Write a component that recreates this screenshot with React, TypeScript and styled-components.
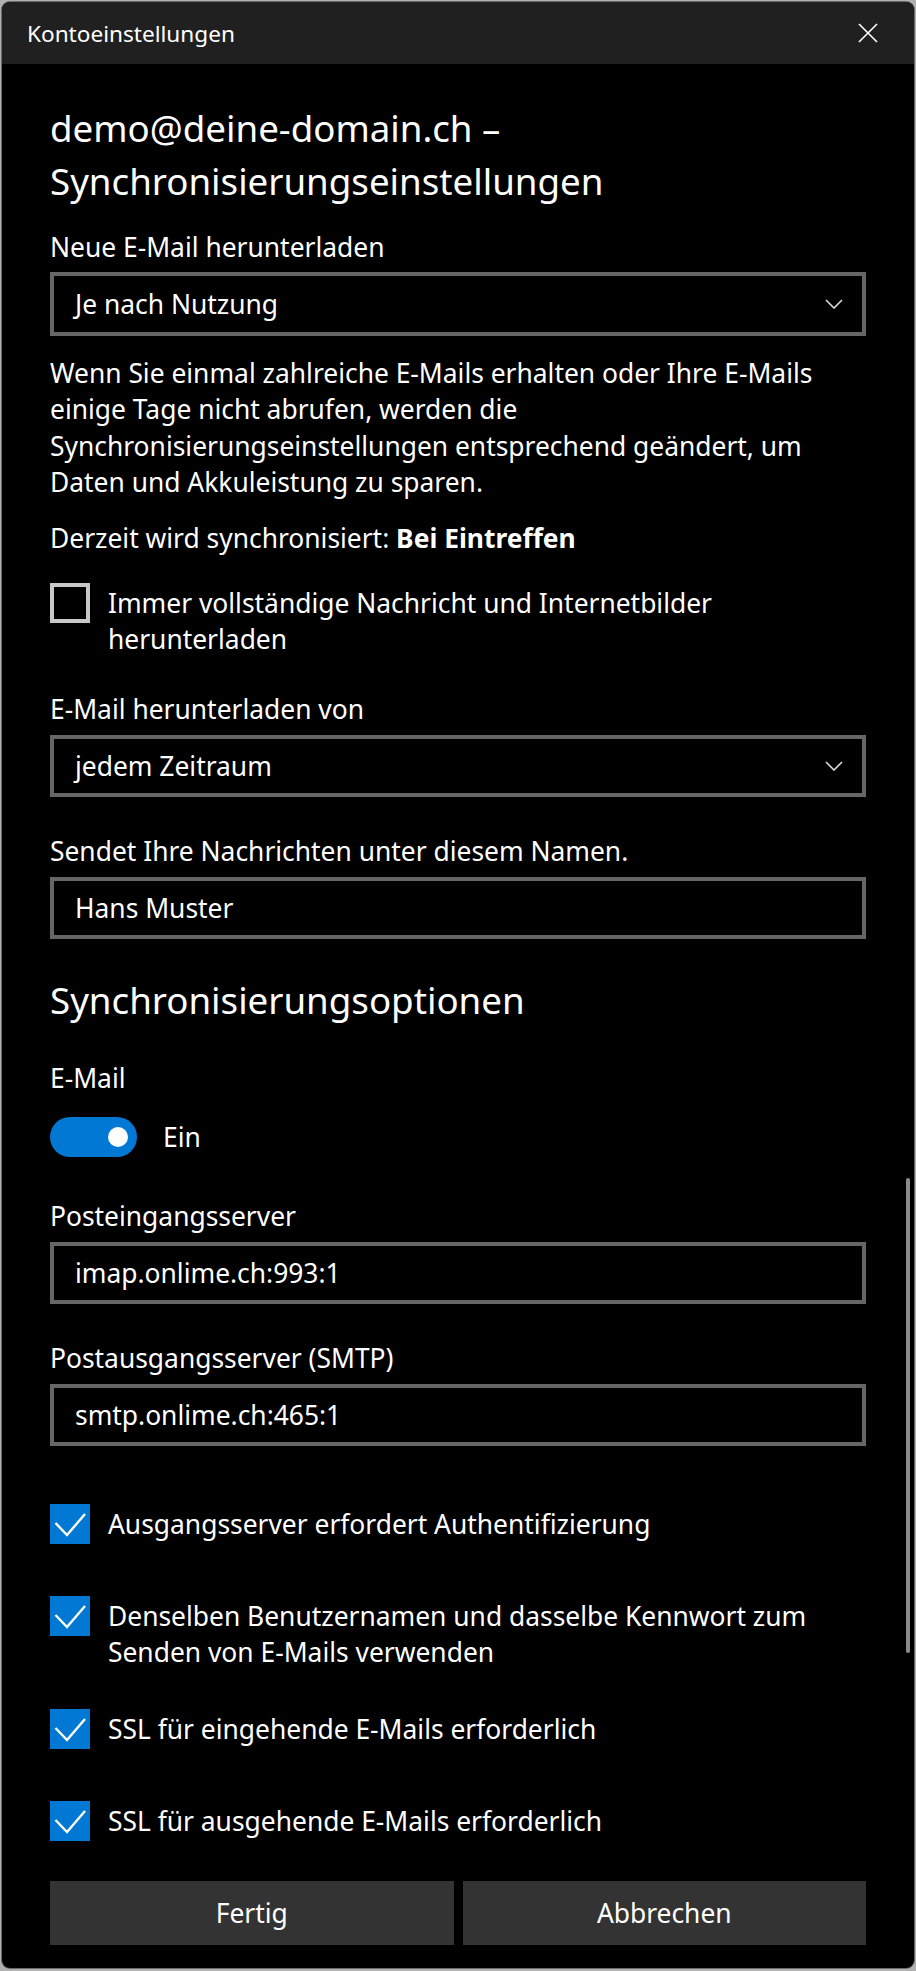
import React from "react";
import styled, { createGlobalStyle } from "styled-components";

const GlobalStyle = createGlobalStyle`
  html, body {
    margin: 0;
    background: #b0b0b0;
  }
  body {
    font-family: "Noto Sans", "Open Sans", sans-serif;
    -webkit-font-smoothing: antialiased;
  }
`;

// Dialog frame
const Window = styled.div`
  position: relative;
  box-sizing: border-box;
  width: 912px;
  height: 1966px;
  margin: 2px;
  background: #000;
  color: #fff;
  border-radius: 8px;
  overflow: hidden;
  box-shadow: 0 0 0 1px #6a6a6a;
`;

const TitleBar = styled.header`
  display: flex;
  align-items: center;
  justify-content: space-between;
  height: 62px;
  padding: 0 36px 0 25px;
  background: #202020;
`;

const Title = styled.span`
  font-size: 22.6px;
  color: #fff;
`;

const CloseButton = styled.button`
  display: flex;
  padding: 0;
  border: 0;
  background: none;
  cursor: pointer;
`;

const Body = styled.main`
  display: flex;
  flex-direction: column;
  padding: 0 48px 23px;
`;

const Heading = styled.h2<{ $mt: number }>`
  margin: ${(p) => p.$mt}px 0 0;
  font-size: 36.7px;
  font-weight: 400;
  line-height: 53px;
`;

const Label = styled.div<{ $mt: number }>`
  margin-top: ${(p) => p.$mt}px;
  font-size: 26.4px;
  line-height: 36px;
`;

const Paragraph = styled.p<{ $mt: number }>`
  margin: ${(p) => p.$mt}px 0 0;
  font-size: 26.4px;
  line-height: 36.3px;
`;

const Field = styled.div<{ $mt: number; $h: number }>`
  box-sizing: border-box;
  display: flex;
  align-items: center;
  justify-content: space-between;
  margin-top: ${(p) => p.$mt}px;
  height: ${(p) => p.$h}px;
  padding: 0 19px 0 21px;
  border: 4px solid #666;
  font-size: 26.4px;
`;

const CheckRow = styled.label<{ $mt: number }>`
  display: flex;
  align-items: flex-start;
  gap: 18px;
  margin-top: ${(p) => p.$mt}px;
  min-height: 40px;
`;

const Box = styled.span<{ $checked: boolean }>`
  box-sizing: border-box;
  flex: 0 0 40px;
  height: 40px;
  display: flex;
  align-items: center;
  justify-content: center;
  background: ${(p) => (p.$checked ? "#0078d4" : "transparent")};
  border: ${(p) => (p.$checked ? "none" : "4px solid #c8c8c8")};
`;

const CheckText = styled.span`
  padding-top: 2px;
  font-size: 26.4px;
  line-height: 36px;
`;

const ToggleRow = styled.div<{ $mt: number }>`
  display: flex;
  align-items: center;
  gap: 26px;
  margin-top: ${(p) => p.$mt}px;
  font-size: 26.4px;
`;

const Track = styled.span`
  box-sizing: border-box;
  display: flex;
  align-items: center;
  justify-content: flex-end;
  width: 87px;
  height: 40px;
  padding-right: 9px;
  border-radius: 20px;
  background: #0078d4;
`;

const Knob = styled.span`
  width: 20px;
  height: 20px;
  border-radius: 50%;
  background: #fff;
`;

const Footer = styled.div`
  display: grid;
  grid-template-columns: 1fr 1fr;
  gap: 9px;
  margin-top: 40px;
`;

const Button = styled.button`
  height: 64px;
  border: 0;
  background: #333;
  color: #fff;
  font-family: inherit;
  font-size: 26.4px;
`;

const ScrollThumb = styled.div`
  position: absolute;
  top: 1176px;
  right: 4px;
  width: 4px;
  height: 475px;
  border-radius: 2px;
  background: #8b8b8b;
`;

const CloseIcon = () => (
  <svg width="20" height="20" viewBox="0 0 20 20">
    <path d="M1 1 L19 19 M19 1 L1 19" stroke="#fff" strokeWidth="1.6" fill="none" />
  </svg>
);

const Chevron = () => (
  <svg width="18" height="10" viewBox="0 0 18 10">
    <polyline points="1,1 9,9 17,1" stroke="#ddd" strokeWidth="1.6" fill="none" />
  </svg>
);

const Tick = () => (
  <svg width="40" height="40" viewBox="0 0 40 40">
    <polyline points="5.5,19 17,31 35,10" stroke="#fff" strokeWidth="2.4" fill="none" />
  </svg>
);

type CheckProps = { checked: boolean; mt: number; children: React.ReactNode };

const Check = ({ checked, mt, children }: CheckProps) => (
  <CheckRow $mt={mt}>
    <Box $checked={checked}>{checked && <Tick />}</Box>
    <CheckText>{children}</CheckText>
  </CheckRow>
);

const App = () => {
  return (
    <>
      <GlobalStyle />
      <Window>
        <TitleBar>
          <Title>Kontoeinstellungen</Title>
          <CloseButton aria-label="Schliessen">
            <CloseIcon />
          </CloseButton>
        </TitleBar>
        <Body>
          <Heading $mt={38}>
            demo@deine-domain.ch –<br />
            Synchronisierungseinstellungen
          </Heading>

          <Label $mt={21}>Neue E-Mail herunterladen</Label>
          <Field $mt={7} $h={64}>
            Je nach Nutzung
            <Chevron />
          </Field>

          <Paragraph $mt={19}>
            Wenn Sie einmal zahlreiche E-Mails erhalten oder Ihre E-Mails
            einige Tage nicht abrufen, werden die
            Synchronisierungseinstellungen entsprechend geändert, um Daten und
            Akkuleistung zu sparen.
          </Paragraph>

          <Label $mt={20}>
            Derzeit wird synchronisiert: <b>Bei Eintreffen</b>
          </Label>

          <Check checked={false} mt={27}>
            Immer vollständige Nachricht und Internetbilder
            <br />
            herunterladen
          </Check>

          <Label $mt={34}>E-Mail herunterladen von</Label>
          <Field $mt={8} $h={62}>
            jedem Zeitraum
            <Chevron />
          </Field>

          <Label $mt={36}>Sendet Ihre Nachrichten unter diesem Namen.</Label>
          <Field $mt={8} $h={62}>
            Hans Muster
          </Field>

          <Heading $mt={35}>Synchronisierungsoptionen</Heading>

          <Label $mt={33}>E-Mail</Label>
          <ToggleRow $mt={21}>
            <Track>
              <Knob />
            </Track>
            Ein
          </ToggleRow>

          <Label $mt={41}>Posteingangsserver</Label>
          <Field $mt={8} $h={62}>
            imap.onlime.ch:993:1
          </Field>

          <Label $mt={36}>Postausgangsserver (SMTP)</Label>
          <Field $mt={8} $h={62}>
            smtp.onlime.ch:465:1
          </Field>

          <Check checked mt={58}>
            Ausgangsserver erfordert Authentifizierung
          </Check>
          <Check checked mt={52}>
            Denselben Benutzernamen und dasselbe Kennwort zum
            <br />
            Senden von E-Mails verwenden
          </Check>
          <Check checked mt={39}>
            SSL für eingehende E-Mails erforderlich
          </Check>
          <Check checked mt={52}>
            SSL für ausgehende E-Mails erforderlich
          </Check>

          <Footer>
            <Button>Fertig</Button>
            <Button>Abbrechen</Button>
          </Footer>
        </Body>
        <ScrollThumb />
      </Window>
    </>
  );
};

export default App;
